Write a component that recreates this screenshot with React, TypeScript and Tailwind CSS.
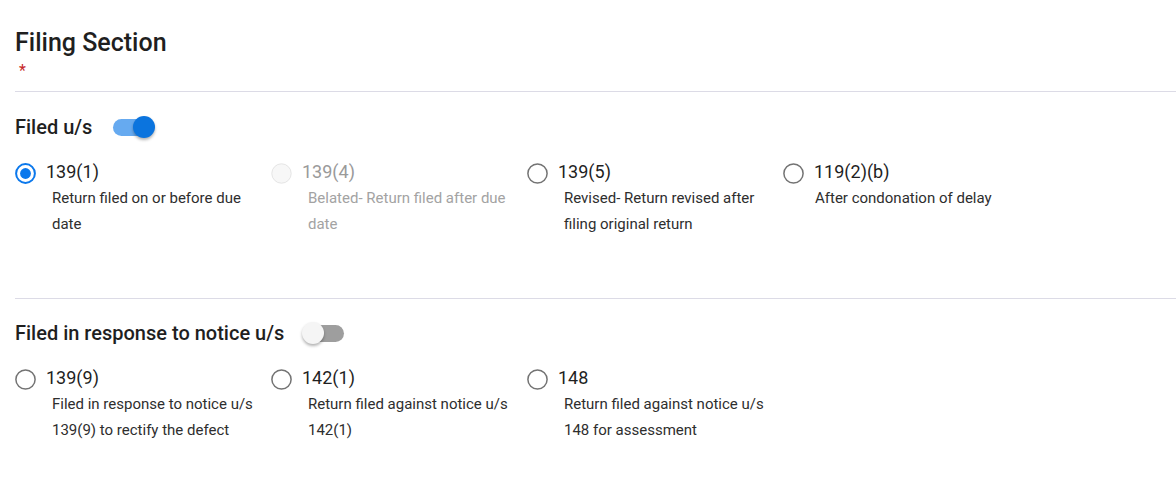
import React, { useState } from "react"

type Option = {
  code: string
  description: string
  disabled?: boolean
  descIndent?: "wide" | "narrow"
}

const filedOptions: Option[] = [
  { code: "139(1)", description: "Return filed on or before due date" },
  { code: "139(4)", description: "Belated- Return filed after due date", disabled: true },
  { code: "139(5)", description: "Revised- Return revised after filing original return" },
  { code: "119(2)(b)", description: "After condonation of delay", descIndent: "narrow" },
]

const noticeOptions: Option[] = [
  { code: "139(9)", description: "Filed in response to notice u/s 139(9) to rectify the defect" },
  { code: "142(1)", description: "Return filed against notice u/s 142(1)" },
  { code: "148", description: "Return filed against notice u/s 148 for assessment" },
]

function Toggle({ on, onClick }: { on: boolean; onClick: () => void }) {
  return (
    <button
      type="button"
      onClick={onClick}
      className="relative ml-[18px] flex h-[24px] w-[46px] items-center"
      aria-pressed={on}
    >
      <span className={`ml-[3px] h-[17px] w-[39px] rounded-full ${on ? "bg-[#66aaf0]" : "bg-[#9e9e9e]"}`} />
      <span
        className={`absolute top-[1px] h-[22px] w-[22px] rounded-full shadow-[0_2px_3px_rgba(0,0,0,0.3)] ${
          on ? "left-[23px] bg-[#0b74de]" : "left-0 bg-[#f5f5f5]"
        }`}
      />
    </button>
  )
}

function RadioIcon({ checked, disabled }: { checked: boolean; disabled?: boolean }) {
  if (disabled) {
    return (
      <svg width="21" height="21" viewBox="0 0 21 21" className="mt-[3px] shrink-0">
        <circle cx="10.5" cy="10.5" r="9.7" fill="#f7f7f7" stroke="#e4e4e4" strokeWidth="1" />
      </svg>
    )
  }
  return (
    <svg width="21" height="21" viewBox="0 0 21 21" className="mt-[3px] shrink-0">
      <circle
        cx="10.5"
        cy="10.5"
        r={checked ? 9.4 : 9.6}
        fill="none"
        stroke={checked ? "#0b78ec" : "#737373"}
        strokeWidth={checked ? 2 : 1.5}
      />
      {checked ? <circle cx="10.5" cy="10.5" r="5.4" fill="#0b78ec" /> : null}
    </svg>
  )
}

function RadioGroup({
  options,
  selected,
  onSelect,
}: {
  options: Option[]
  selected: string
  onSelect: (code: string) => void
}) {
  return (
    <div className="mt-[19px] grid grid-cols-[repeat(4,256px)]">
      {options.map((item) => (
        <label
          key={item.code}
          className={`flex flex-col ${item.disabled ? "cursor-default" : "cursor-pointer"}`}
          onClick={() => {
            if (!item.disabled) onSelect(item.code)
          }}
        >
          <div className="flex items-start">
            <RadioIcon checked={selected === item.code} disabled={item.disabled} />
            <span
              className={`ml-[10px] text-[18px] leading-[24px] ${item.disabled ? "text-[#9a9a9a]" : "text-[#1f1f1f]"}`}
            >
              {item.code}
            </span>
          </div>
          <p
            className={`mt-[1px] w-[215px] text-[15px] leading-[26px] ${
              item.descIndent === "narrow" ? "ml-[32px]" : "ml-[37px]"
            } ${item.disabled ? "text-[#a3a3a3]" : "text-[#2e2e2e]"}`}
          >
            {item.description}
          </p>
        </label>
      ))}
    </div>
  )
}

export default function App() {
  const [filedOn, setFiledOn] = useState(true)
  const [noticeOn, setNoticeOn] = useState(false)
  const [filedSelected, setFiledSelected] = useState("139(1)")
  const [noticeSelected, setNoticeSelected] = useState("")

  return (
    <div className="min-h-[492px] bg-white pl-[15px] pt-[28px] font-['Roboto',sans-serif]">
      <h2 className="text-[25px] font-medium leading-[29px] text-[#1f1f1f]">Filing Section</h2>
      <div className="mt-[4px] h-[20px] pl-[4px] text-[16px] leading-[20px] text-[#c62828]">*</div>

      <div className="mt-[10px] border-t border-[#dcdbe6]" />

      <section>
        <div className="mt-[21px] flex h-[28px] items-center">
          <span className="text-[20px] font-medium text-[#1f1f1f]">Filed u/s</span>
          <Toggle on={filedOn} onClick={() => setFiledOn((current) => !current)} />
        </div>
        <RadioGroup options={filedOptions} selected={filedSelected} onSelect={setFiledSelected} />
      </section>

      <div className="mt-[61px] border-t border-[#dcdbe6]" />

      <section>
        <div className="mt-[20px] flex h-[28px] items-center">
          <span className="text-[20px] font-medium text-[#1f1f1f]">Filed in response to notice u/s</span>
          <Toggle on={noticeOn} onClick={() => setNoticeOn((current) => !current)} />
        </div>
        <RadioGroup options={noticeOptions} selected={noticeSelected} onSelect={setNoticeSelected} />
      </section>
    </div>
  )
}
